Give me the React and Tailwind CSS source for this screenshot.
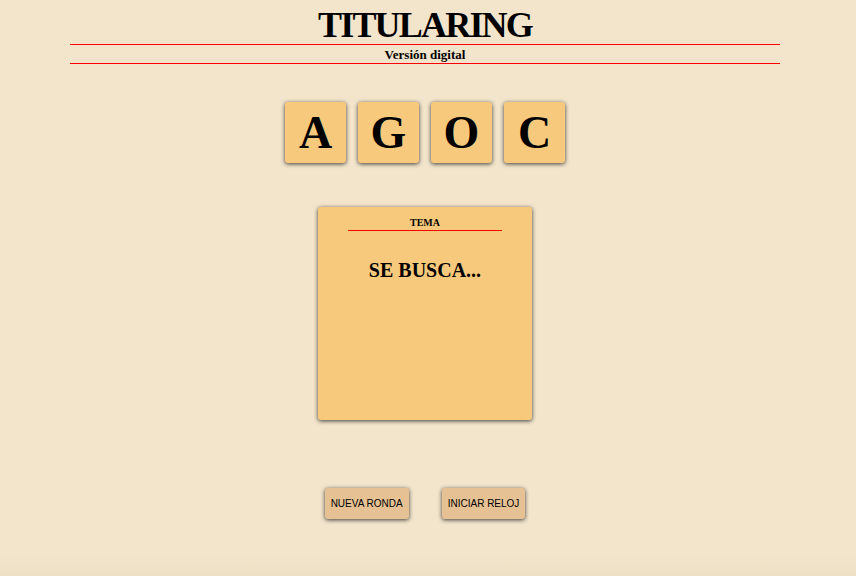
const LETTERS = ['A', 'G', 'O', 'C'];

function Tile({ letter }) {
  return (
    <div className="flex h-[61px] w-[61px] items-center justify-center rounded-[3px] bg-[#f7c97c] shadow-[0_1px_4px_rgba(0,0,0,0.75)]">
      <span className="text-[46px] font-bold leading-none">{letter}</span>
    </div>
  );
}

function ActionButton({ children }) {
  return (
    <button className="h-[31px] rounded-[3px] bg-[#e6c194] px-[6px] font-['Liberation_Sans',Arial,sans-serif] text-[10px] text-black shadow-[0_1px_4px_rgba(0,0,0,0.75)]">
      {children}
    </button>
  );
}

function RedRule() {
  return <div className="h-px bg-[#ff0000]" />;
}

export default function App() {
  return (
    <div className="flex min-h-[576px] flex-col bg-[#f2e5cc] font-['Liberation_Serif','Times_New_Roman',serif] text-black">
      <div className="w-[850px]">
        <header className="px-[70px] pt-[7px]">
          <h1 className="text-center text-[36px] font-bold leading-[37px] tracking-[-1.8px]">TITULARING</h1>
          <RedRule />
          <p className="pt-[1px] text-center text-[13px] font-bold leading-[17px]">Versión digital</p>
          <RedRule />
        </header>

        <div className="mt-[38px] flex justify-center gap-[12px]">
          {LETTERS.map((l) => (
            <Tile key={l} letter={l} />
          ))}
        </div>

        <div className="mt-[44px] flex justify-center">
          <div className="h-[213px] w-[214px] rounded-[3px] bg-[#f7c97c] shadow-[0_1px_4px_rgba(0,0,0,0.75)]">
            <div className="mx-auto mt-[9px] w-[154px] pb-[1px] text-center text-[10px] font-bold leading-[13px]">
              TEMA
            </div>
            <div className="mx-auto h-px w-[154px] bg-[#ff0000]" />
            <p className="mt-[27px] text-center text-[20px] font-bold leading-[24px]">SE BUSCA...</p>
          </div>
        </div>

        <div className="mt-[68px] flex justify-center gap-[33px]">
          <ActionButton>NUEVA RONDA</ActionButton>
          <ActionButton>INICIAR RELOJ</ActionButton>
        </div>
      </div>
      <div className="mt-auto h-[22px] bg-gradient-to-b from-[#f2e5cc] to-[#ede0c4]" />
    </div>
  );
}
